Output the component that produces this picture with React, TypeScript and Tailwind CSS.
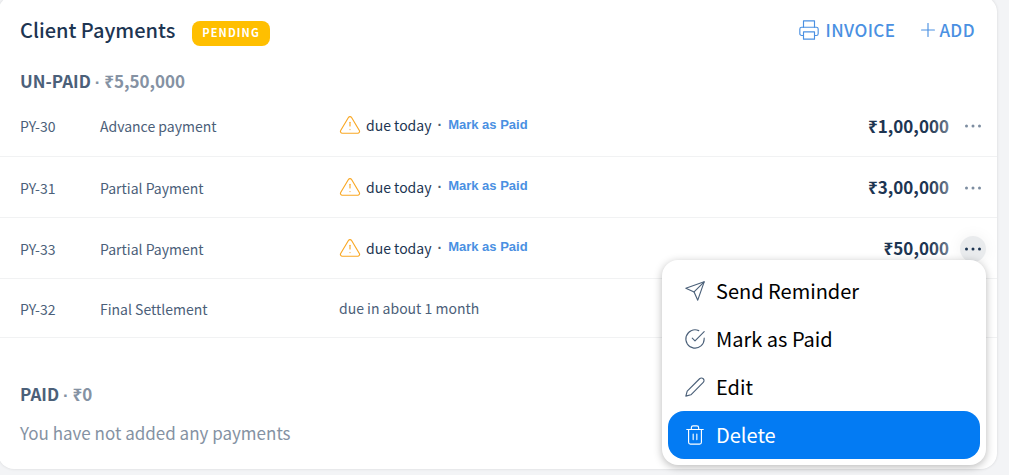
import {
  FiAlertTriangle,
  FiCheckCircle,
  FiEdit2,
  FiPlus,
  FiPrinter,
  FiSend,
  FiTrash2,
} from "react-icons/fi";

type Payment = {
  id: string;
  name: string;
  due: string;
  urgent: boolean;
  amount: string;
};

const unpaid: Payment[] = [
  { id: "PY-30", name: "Advance payment", due: "due today", urgent: true, amount: "₹1,00,000" },
  { id: "PY-31", name: "Partial Payment", due: "due today", urgent: true, amount: "₹3,00,000" },
  { id: "PY-33", name: "Partial Payment", due: "due today", urgent: true, amount: "₹50,000" },
  { id: "PY-32", name: "Final Settlement", due: "due in about 1 month", urgent: false, amount: "₹1,00,000" },
];

const openId = "PY-33";

const menuItems = [
  { label: "Send Reminder", Icon: FiSend },
  { label: "Mark as Paid", Icon: FiCheckCircle },
  { label: "Edit", Icon: FiEdit2 },
  { label: "Delete", Icon: FiTrash2 },
];

function Dots() {
  return (
    <svg viewBox="0 0 18 4" className="h-1 w-[18px]" fill="currentColor" aria-hidden="true">
      <circle cx="2.5" cy="2" r="1.5" />
      <circle cx="9" cy="2" r="1.5" />
      <circle cx="15.5" cy="2" r="1.5" />
    </svg>
  );
}

function ActionMenu() {
  return (
    <div
      role="menu"
      className="absolute top-6 right-0 z-10 w-[324px] rounded-2xl bg-white px-1.5 pt-[7px] pb-1.5 shadow-[0_2px_8px_rgba(0,0,0,0.28)]"
    >
      {menuItems.map(({ label, Icon }) => {
        const active = label === "Delete";
        return (
          <button
            key={label}
            type="button"
            role="menuitem"
            className={
              active
                ? "flex h-12 w-full items-center gap-2.5 rounded-2xl bg-[#037bf3] px-4 text-xl text-white"
                : "flex h-12 w-full items-center gap-2.5 rounded-2xl px-4 text-xl text-black"
            }
          >
            <Icon
              size={22}
              strokeWidth={1.25}
              className={active ? "text-white" : "text-[#4b6079]"}
            />
            {label}
          </button>
        );
      })}
    </div>
  );
}

function SectionTitle({ label, total }: { label: string; total: string }) {
  return (
    <h2 className="px-5 text-[17px] leading-6 font-bold">
      {label}{" "}
      <span className="text-[#8592a3]">
        <span className="font-['Liberation_Sans',sans-serif]">·</span> {total}
      </span>
    </h2>
  );
}

function PaymentRow({ payment }: { payment: Payment }) {
  const open = payment.id === openId;
  return (
    <tr className={payment.urgent ? "h-[61px] border-b border-[#f1f2f3]" : "h-[59px] border-b border-[#f1f2f3]"}>
      <td className="pt-0.5 pl-5">{payment.id}</td>
      <td className="pt-0.5">{payment.name}</td>
      <td>
        {payment.urgent ? (
          <div className="flex items-center">
            <FiAlertTriangle size={22} strokeWidth={1.25} className="mr-[5px] text-[#f9a825]" />
            <span className="text-[#1d3552]">{payment.due}</span>
            <span className="mx-1.5 font-['Liberation_Sans',sans-serif] font-bold">·</span>
            <button
              type="button"
              className="font-['Liberation_Sans',sans-serif] text-[13px] font-bold text-[#4a90e2]"
            >
              Mark as Paid
            </button>
          </div>
        ) : (
          payment.due
        )}
      </td>
      <td className="pt-0.5 text-right text-[17px] font-bold text-[#1d3552]">{payment.amount}</td>
      <td className="pt-0.5">
        <div className="relative flex justify-end pr-[11px]">
          <span className="absolute inset-y-0 right-9 w-8 bg-linear-to-r from-white/0 to-white/60" />
          <div className="relative">
            <button
              type="button"
              aria-label={`Actions for ${payment.id}`}
              aria-expanded={open}
              className={
                open
                  ? "flex size-[26px] items-center justify-center rounded-full bg-[#e9ebed] text-[#1d3552] shadow-[0_0_16px_rgba(0,0,0,0.06)]"
                  : "flex size-[26px] items-center justify-center rounded-full text-[#7d8da1]"
              }
            >
              <Dots />
            </button>
            {open && <ActionMenu />}
          </div>
        </div>
      </td>
    </tr>
  );
}

export default function App() {
  return (
    <main className="flow-root min-h-screen bg-[#f3f4f6] pr-3 font-['Noto_Sans_CJK_SC','Noto_Sans',sans-serif] text-sm text-[#4b6079]">
      <section className="-mt-1 -ml-0.5 rounded-2xl bg-white pt-[15px] pb-[22px] pl-0.5 shadow-[0_0_3px_rgba(0,0,0,0.12)]">
        <header className="flex h-[38px] items-center pr-[22px] pl-5">
          <h1 className="text-xl font-medium text-[#1d3552]">Client Payments</h1>
          <span className="mt-1.5 ml-[17px] flex h-[25px] items-center rounded-lg bg-[#ffbf00] px-2.5 text-[11px] font-bold tracking-widest text-white">
            PENDING
          </span>
          <div className="ml-auto flex items-center gap-[22px] text-[17px] font-medium tracking-wide text-[#4a90e2]">
            <button type="button" className="flex items-center gap-1.5">
              <FiPrinter size={22} strokeWidth={1.25} />
              INVOICE
            </button>
            <button type="button" className="flex items-center">
              <FiPlus size={22} strokeWidth={1.25} />
              ADD
            </button>
          </div>
        </header>

        <div className="mt-5">
          <SectionTitle label="UN-PAID" total="₹5,50,000" />
        </div>

        <table className="w-full table-fixed border-collapse">
          <colgroup>
            <col className="w-[100px]" />
            <col className="w-[239px]" />
            <col />
            <col className="w-40" />
            <col className="w-12" />
          </colgroup>
          <tbody>
            {unpaid.map((payment) => (
              <PaymentRow key={payment.id} payment={payment} />
            ))}
          </tbody>
        </table>

        <div className="mt-11">
          <SectionTitle label="PAID" total="₹0" />
        </div>
        <p className="mt-[11px] px-5 text-[17px] leading-7 text-[#8592a3]">
          You have not added any payments
        </p>
      </section>
    </main>
  );
}
